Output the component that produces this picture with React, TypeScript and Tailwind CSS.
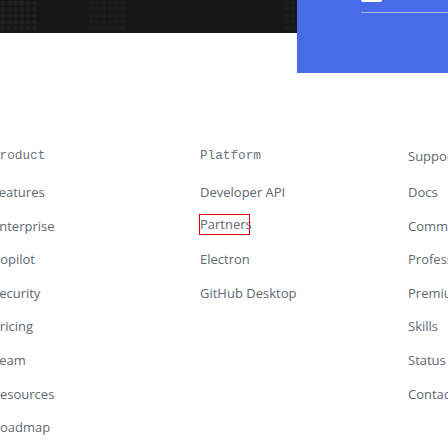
import React from "react";

const col1 = ["Features", "Enterprise", "Copilot", "Security", "Pricing", "Team", "Resources", "Roadmap"];
const col2 = ["Developer API", "Partners", "Electron", "GitHub Desktop"];
const col3 = ["Docs", "Community Forum", "Professional Services", "Premium Support", "Skills", "Status", "Contact GitHub"];

function Column({ title, items, mono = true }: { title: string; items: string[]; mono?: boolean }) {
  return (
    <div className="w-[208px] shrink-0 flex flex-col">
      <div
        className={mono ? "h-[20px] leading-[20px] text-[12.7px] text-[#6a737d] whitespace-nowrap" : "h-[20px] leading-[20px] text-[13px] text-[#5f6873] whitespace-nowrap"}
        style={{ fontFamily: mono ? '"Liberation Mono", monospace' : '"Open Sans", sans-serif' }}
      >
        {title}
      </div>
      <ul className="mt-[16px] flex flex-col gap-[13.6px]">
        {items.map((it) => (
          <li key={it} className="h-[20px] leading-[20px] text-[13px] text-[#5f6873] whitespace-nowrap" style={{ fontFamily: '"Open Sans", sans-serif' }}>
            {it === "Partners" ? (
              <span className="inline-block h-[21px] w-[51px] border border-[#e00000] leading-[19px] -ml-[1px] -mt-[2px] align-top">
                {it}
              </span>
            ) : (
              it
            )}
          </li>
        ))}
      </ul>
    </div>
  );
}

export default function App() {
  return (
    <div className="w-[448px] h-[448px] overflow-hidden bg-white relative">
      <div className="flex items-start">
        <div className="flex-1 h-[33px] bg-[#161616] overflow-hidden">
          <svg width="297" height="33" className="block">
            <defs>
              <pattern id="sq" width="6.3" height="6.3" patternUnits="userSpaceOnUse">
                <rect x="0.8" y="0.8" width="4.4" height="4.4" fill="#1f1f1f" />
              </pattern>
            </defs>
            <rect x="0" y="0" width="37" height="33" fill="url(#sq)" />
            <rect x="85" y="0" width="40" height="33" fill="url(#sq)" opacity="0.6" />
            <rect x="283" y="0" width="14" height="33" fill="url(#sq)" opacity="0.6" />
          </svg>
        </div>
        <div className="w-[151px] h-[73px] bg-[#486be9] pl-[64px] flex flex-col">
          <div className="w-[21px] h-[2px] bg-white rounded-b-[2px]" />
          <div className="mt-[10px] h-[1px] bg-[#a7b7f4]" />
        </div>
      </div>
      <div className="flex mt-[73px] -ml-[8px]">
        <Column title="Product" items={col1} />
        <Column title="Platform" items={col2} />
        <Column title="Support" items={col3} mono={false} />
      </div>
    </div>
  );
}
